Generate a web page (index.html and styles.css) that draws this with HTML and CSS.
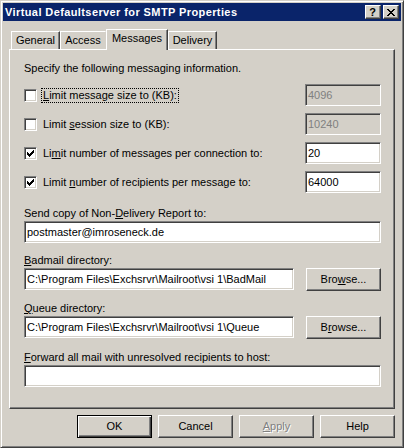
FILE: index.html
```html
<!DOCTYPE html>
<html>
<head>
<meta charset="utf-8">
<link rel="stylesheet" href="styles.css">
</head>
<body>
<div class="window">
  <div class="titlebar">
    <span class="title">Virtual Defaultserver for SMTP Properties</span>
    <div class="caption-btns">
      <span class="cbtn help">?</span>
      <span class="cbtn close"><svg width="8" height="7" viewBox="0 0 8 7"><path d="M0 0h2v1H0zM6 0h2v1H6zM1 1h2v1H1zM5 1h2v1H5zM2 2h4v1H2zM3 3h2v1H3zM2 4h4v1H2zM1 5h2v1H1zM5 5h2v1H5zM0 6h2v1H0zM6 6h2v1H6z" fill="#000"/></svg></span>
    </div>
  </div>
  <div class="client">
    <div class="tabs">
      <div class="tab t-general">General</div>
      <div class="tab t-access">Access</div>
      <div class="tab active t-messages">Messages</div>
      <div class="tab t-delivery">Delivery</div>
    </div>
    <div class="panel">
      <div class="intro">Specify the following messaging information.</div>

      <div class="crow first">
        <span class="check"></span>
        <span class="clabel focus"><u>L</u>imit message size to (KB):</span>
        <span class="edit small disabled">4096</span>
      </div>
      <div class="crow">
        <span class="check"></span>
        <span class="clabel">Limit <u>s</u>ession size to (KB):</span>
        <span class="edit small disabled">10240</span>
      </div>
      <div class="crow">
        <span class="check checked"><svg width="7" height="7" viewBox="0 0 7 7"><path d="M0 2h1v3H0zM1 3h1v3H1zM2 4h1v3H2zM3 3h1v3H3zM4 2h1v3H4zM5 1h1v3H5zM6 0h1v3H6z" fill="#000"/></svg></span>
        <span class="clabel">Li<u>m</u>it number of messages per connection to:</span>
        <span class="edit small">20</span>
      </div>
      <div class="crow">
        <span class="check checked"><svg width="7" height="7" viewBox="0 0 7 7"><path d="M0 2h1v3H0zM1 3h1v3H1zM2 4h1v3H2zM3 3h1v3H3zM4 2h1v3H4zM5 1h1v3H5zM6 0h1v3H6z" fill="#000"/></svg></span>
        <span class="clabel">Limit <u>n</u>umber of recipients per message to:</span>
        <span class="edit small">64000</span>
      </div>

      <div class="label l-send">Send copy of Non-<u>D</u>elivery Report to:</div>
      <div class="edit full">postmaster@imroseneck.de</div>

      <div class="label l-bad"><u>B</u>admail directory:</div>
      <div class="brow">
        <span class="edit path">C:\Program Files\Exchsrvr\Mailroot\vsi 1\BadMail</span>
        <span class="btn browse">Bro<u>w</u>se...</span>
      </div>

      <div class="label l-queue"><u>Q</u>ueue directory:</div>
      <div class="brow">
        <span class="edit path">C:\Program Files\Exchsrvr\Mailroot\vsi 1\Queue</span>
        <span class="btn browse">B<u>r</u>owse...</span>
      </div>

      <div class="label l-fwd"><u>F</u>orward all mail with unresolved recipients to host:</div>
      <div class="edit full"></div>
    </div>
    <div class="buttons">
      <span class="btn default">OK</span>
      <span class="btn">Cancel</span>
      <span class="btn disabled"><u>A</u>pply</span>
      <span class="btn">Help</span>
    </div>
  </div>
</div>
</body>
</html>
```
FILE: styles.css
```css
html, body {
  margin: 0;
  padding: 0;
  background: #d4d0c8;
}

body {
  font-family: "Liberation Sans", Arial, sans-serif;
  font-size: 11px;
  line-height: 13px;
  color: #000;
}

u {
  text-decoration: underline;
  text-underline-offset: 1px;
}

.window {
  width: 404px;
  height: 448px;
  box-sizing: border-box;
  border: 1px solid;
  border-color: #d4d0c8 #404040 #404040 #d4d0c8;
  box-shadow: inset 1px 1px #fff, inset -1px -1px #808080;
  padding: 2px;
  background: #d4d0c8;
}

.titlebar {
  height: 18px;
  background: #0a246a;
  display: flex;
  align-items: center;
  justify-content: space-between;
  padding: 0 2px 0 2px;
}

.title {
  color: #fff;
  font-weight: bold;
  letter-spacing: 0.4px;
  line-height: 18px;
  white-space: nowrap;
}

.caption-btns {
  display: flex;
  gap: 2px;
}

.cbtn {
  width: 16px;
  height: 14px;
  box-sizing: border-box;
  background: #d4d0c8;
  border: 1px solid;
  border-color: #fff #404040 #404040 #fff;
  box-shadow: inset -1px -1px #808080;
  display: flex;
  align-items: center;
  justify-content: center;
}

.cbtn.help {
  font-weight: bold;
  font-size: 11px;
  line-height: 12px;
  padding-right: 1px;
}

.cbtn svg {
  display: block;
  margin-right: 1px;
}

.client {
  padding: 0 6px;
}

.tabs {
  display: flex;
  align-items: flex-end;
  height: 20px;
  margin-top: 8px;
  margin-left: 2px;
  position: relative;
  z-index: 1;
}

.tab {
  height: 18px;
  box-sizing: border-box;
  border-left: 1px solid #fff;
  border-top: 1px solid #fff;
  border-right: 1px solid #404040;
  box-shadow: inset -1px 0 #808080;
  padding-top: 2px;
  text-align: center;
  background: #d4d0c8;
  white-space: nowrap;
}

.t-general { width: 49px; }
.t-access {
  width: 46px;
  border-right-color: #d4d0c8;
  box-shadow: none;
}
.t-messages { width: 62px; }
.t-delivery { width: 49px; }

.tab.active {
  height: 21px;
  margin-bottom: -1px;
  padding-top: 2px;
}

.panel {
  width: 386px;
  height: 360px;
  box-sizing: border-box;
  border: 1px solid;
  border-color: #fff #404040 #404040 #fff;
  box-shadow: inset -1px -1px #808080;
  padding: 12px 0 0 14px;
}

.intro {
  height: 13px;
}

.crow {
  display: flex;
  align-items: flex-start;
  height: 22px;
  width: 357px;
  margin-top: 7px;
}

.crow.first {
  margin-top: 9px;
}

.check {
  width: 13px;
  height: 13px;
  box-sizing: border-box;
  margin-top: 5px;
  background: #fff;
  border: 1px solid;
  border-color: #808080 #fff #fff #808080;
  box-shadow: inset 1px 1px #404040, inset -1px -1px #d4d0c8;
  flex: none;
  display: flex;
  align-items: flex-start;
  justify-content: flex-start;
}

.check svg {
  display: block;
  margin: 2px 0 0 2px;
}

.clabel {
  margin-left: 4px;
  margin-top: 4px;
  padding: 0 1px;
  height: 15px;
  box-sizing: border-box;
  border: 1px solid transparent;
  line-height: 13px;
  white-space: nowrap;
}

.clabel.focus {
  border: 1px dotted #000;
}

.edit {
  display: block;
  height: 22px;
  box-sizing: border-box;
  background: #fff;
  border: 1px solid;
  border-color: #808080 #fff #fff #808080;
  box-shadow: inset 1px 1px #404040, inset -1px -1px #d4d0c8;
  padding: 0 0 0 2px;
  line-height: 20px;
  white-space: nowrap;
  overflow: hidden;
}

.edit.small {
  width: 76px;
  margin-left: auto;
}

.edit.disabled {
  background: #d4d0c8;
  color: #808080;
}

.edit.full {
  width: 357px;
}

.edit.path {
  width: 270px;
  flex: none;
}

.label {
  height: 13px;
  margin-bottom: 1px;
}

.l-send { margin-top: 14px; }
.l-bad { margin-top: 11px; }
.l-queue { margin-top: 11px; }
.l-fwd { margin-top: 12px; }

.brow {
  display: flex;
  align-items: flex-start;
  width: 357px;
  height: 23px;
}

.btn {
  display: flex;
  align-items: center;
  justify-content: center;
  width: 75px;
  height: 23px;
  box-sizing: border-box;
  background: #d4d0c8;
  border: 1px solid;
  border-color: #fff #404040 #404040 #fff;
  box-shadow: inset -1px -1px #808080;
  white-space: nowrap;
  padding-bottom: 1px;
}

.btn.browse {
  margin-left: auto;
}

.btn.default {
  border: 1px solid #000;
  box-shadow: inset 1px 1px #fff, inset -1px -1px #404040, inset -2px -2px #808080;
}

.btn.disabled {
  color: #808080;
  text-shadow: 1px 1px #fff;
}

.buttons {
  display: flex;
  justify-content: flex-end;
  gap: 6px;
  width: 386px;
  margin-top: 6px;
}
```
